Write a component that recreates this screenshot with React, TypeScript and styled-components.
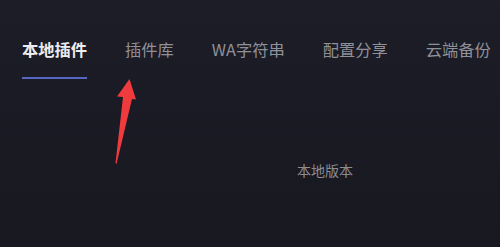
import React, { useState } from 'react';
import styled, { createGlobalStyle } from 'styled-components';

const tabs = ['本地插件', '插件库', 'WA字符串', '配置分享', '云端备份'];

const GlobalStyle = createGlobalStyle`
  html, body {
    margin: 0;
    padding: 0;
    background: #181922;
  }
  body {
    font-family: "Noto Sans CJK SC", "Noto Sans", sans-serif;
  }
`;

function App() {
  const [active, setActive] = useState(0);

  return (
    <Page>
      <GlobalStyle />
      <TabBar>
        {tabs.map((t, i) => (
          <Tab key={t} $active={i === active} onClick={() => setActive(i)}>
            {t}
          </Tab>
        ))}
      </TabBar>

      <Content>
        <Empty>本地版本</Empty>
      </Content>

      <Arrow viewBox="0 0 32 94" width="32" height="94">
        <polygon
          points="21.5,5 28,25.5 24,25 8.5,90 7.5,89 15,23 9,22.5"
          fill="#ef3b3d"
        />
      </Arrow>
    </Page>
  );
}

export default App;

const Page = styled.div`
  position: relative;
  width: 500px;
  height: 247px;
  overflow: hidden;
  background: linear-gradient(180deg, #1c1d27 0%, #1a1b24 40%, #171820 100%);
`;

const TabBar = styled.nav`
  display: flex;
  gap: 38px;
  padding: 38px 0 0 22px;
`;

const Tab = styled.div<{ $active: boolean }>`
  font-size: 16.25px;
  line-height: 22px;
  padding-bottom: 17px;
  white-space: nowrap;
  cursor: pointer;
  color: ${(p) => (p.$active ? '#ececf0' : '#8f9098')};
  font-weight: ${(p) => (p.$active ? 600 : 400)};
  border-bottom: 2px solid ${(p) => (p.$active ? '#5566c0' : 'transparent')};
`;

const Content = styled.section`
  display: flex;
  justify-content: center;
  padding: 81px 0 0 150px;
`;

const Empty = styled.p`
  margin: 0;
  font-size: 14px;
  line-height: 20px;
  color: #8a8b93;
`;

const Arrow = styled.svg`
  position: absolute;
  left: 108px;
  top: 74px;
`;
